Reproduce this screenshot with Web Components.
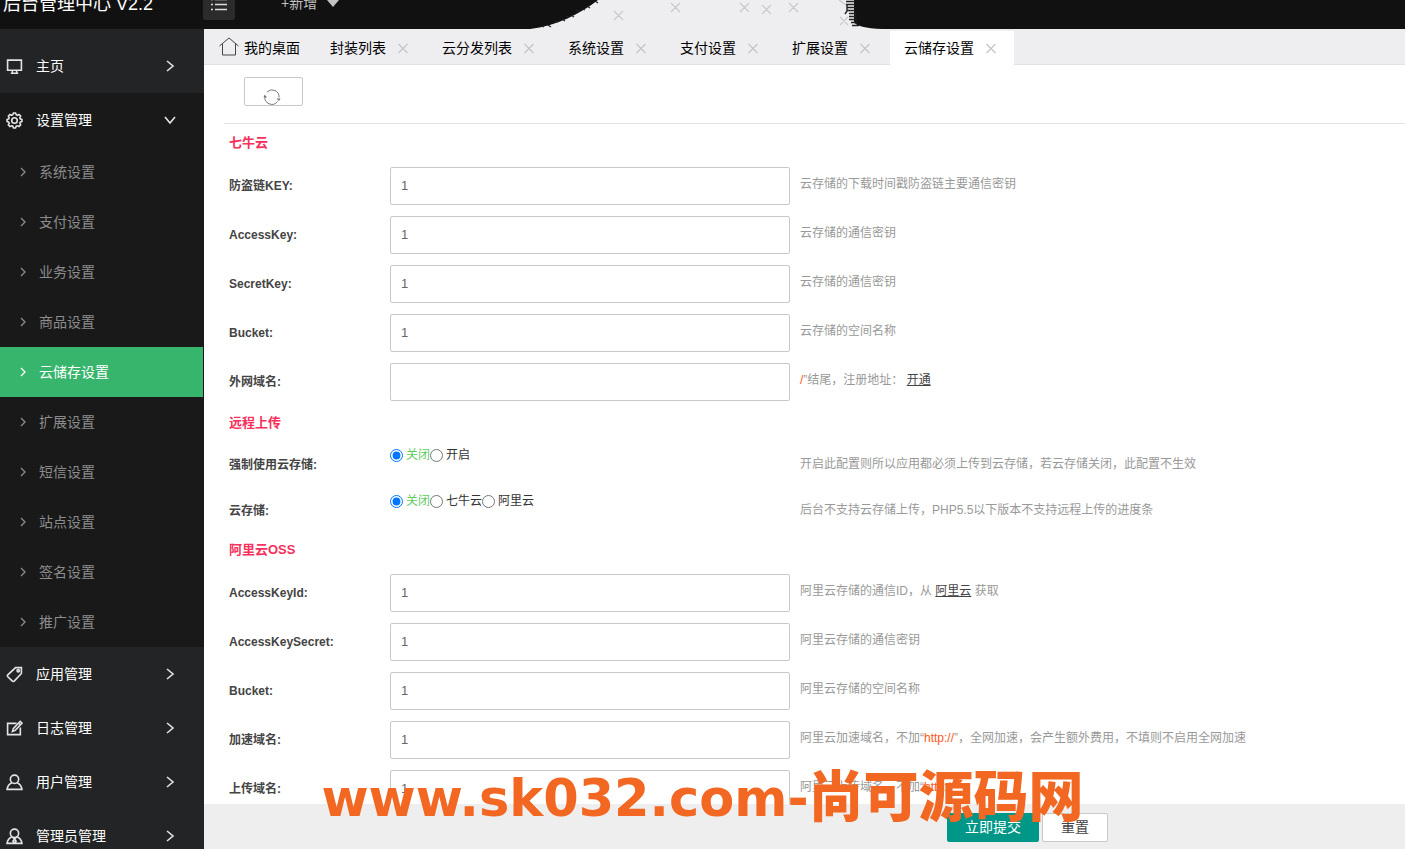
<!DOCTYPE html>
<html lang="zh-CN">
<head>
<meta charset="utf-8">
<title>后台管理中心</title>
<style>
html,body{margin:0;height:100%}
body{font:14px/20px "Liberation Sans","Noto Sans CJK SC",sans-serif;color:#333;background:#fff;overflow:hidden}
</style>
</head>
<body>
<admin-app>
  <admin-header slot="header"></admin-header>
  <side-nav slot="nav">
    <nav-item icon="screen">主页</nav-item>
    <nav-item icon="gear" open>设置管理</nav-item>
    <nav-sub>系统设置</nav-sub>
    <nav-sub>支付设置</nav-sub>
    <nav-sub>业务设置</nav-sub>
    <nav-sub>商品设置</nav-sub>
    <nav-sub active>云储存设置</nav-sub>
    <nav-sub>扩展设置</nav-sub>
    <nav-sub>短信设置</nav-sub>
    <nav-sub>站点设置</nav-sub>
    <nav-sub>签名设置</nav-sub>
    <nav-sub>推广设置</nav-sub>
    <nav-item icon="tag">应用管理</nav-item>
    <nav-item icon="edit">日志管理</nav-item>
    <nav-item icon="user">用户管理</nav-item>
    <nav-item icon="admin">管理员管理</nav-item>
  </side-nav>
  <tab-bar slot="tabs">
    <page-tab home>我的桌面</page-tab>
    <page-tab>封装列表</page-tab>
    <page-tab>云分发列表</page-tab>
    <page-tab>系统设置</page-tab>
    <page-tab>支付设置</page-tab>
    <page-tab>扩展设置</page-tab>
    <page-tab active>云储存设置</page-tab>
  </tab-bar>
  <refresh-bar></refresh-bar>
  <form-section heading="七牛云">
    <text-row label="防盗链KEY:" value="1">云存储的下载时间戳防盗链主要通信密钥</text-row>
    <text-row label="AccessKey:" value="1">云存储的通信密钥</text-row>
    <text-row label="SecretKey:" value="1">云存储的通信密钥</text-row>
    <text-row label="Bucket:" value="1">云存储的空间名称</text-row>
    <text-row label="外网域名:" value=""><em>/</em>”结尾，注册地址： <a href="#">开通</a></text-row>
  </form-section>
  <form-section heading="远程上传">
    <radio-row label="强制使用云存储:" options="关闭,开启">开启此配置则所以应用都必须上传到云存储，若云存储关闭，此配置不生效</radio-row>
    <radio-row label="云存储:" options="关闭,七牛云,阿里云">后台不支持云存储上传，PHP5.5以下版本不支持远程上传的进度条</radio-row>
  </form-section>
  <form-section heading="阿里云OSS">
    <text-row label="AccessKeyId:" value="1">阿里云存储的通信ID，从 <a href="#">阿里云</a> 获取</text-row>
    <text-row label="AccessKeySecret:" value="1">阿里云存储的通信密钥</text-row>
    <text-row label="Bucket:" value="1">阿里云存储的空间名称</text-row>
    <text-row label="加速域名:" value="1">阿里云加速域名，不加“<em>http://</em>”，全网加速，会产生额外费用，不填则不启用全网加速</text-row>
    <text-row label="上传域名:" value="1">阿里云上传域名，不加“<em>http://</em>”</text-row>
  </form-section>
  <action-bar slot="actions"></action-bar>
</admin-app>
<site-mark><span slot="cjk">尚可源码网</span>www.sk032.com-</site-mark>

<script>
function define(name, render) {
  customElements.define(name, class extends HTMLElement {
    constructor() {
      super();
      this.attachShadow({ mode: 'open' });
    }
    connectedCallback() {
      this.shadowRoot.innerHTML = render(this);
    }
  });
}

const reset = '*{box-sizing:border-box}a{color:inherit;text-decoration:none}button,input{font:inherit;color:inherit}svg{display:block;flex:none}';

const icons = {
  screen: '<path d="M1.500 2h13v9.500h-13zM4.500 14.300h7M6 12v2M10 12v2"/>',
  gear: '<path d="M6.400 2.600 7 1h2l.6 1.600 1.100.5 1.600-.8 1.500 1.500-.8 1.600.4 1 1.600.6v2l-1.600.6-.4 1.100.8 1.500-1.500 1.500-1.600-.7-1.100.4L9 15H7l-.6-1.600-1.100-.4-1.600.7-1.500-1.500.8-1.500-.4-1.100L1 9V7l1.600-.6.4-1-.8-1.600 1.500-1.500 1.600.8z"/><circle cx="8" cy="8" r="2.600"/>',
  tag: '<path d="M9 1.500h5.500V7l-6.800 7.200c-.6.600-1.200.6-1.700 0L1.700 10.100c-.5-.6-.5-1.200 0-1.800z"/><circle cx="11.500" cy="4.500" r="1.100"/>',
  edit: '<path d="M10 3.200H1.500v10.600h12V7"/><path d="M13.300 1.200l1.800 1.700-6.400 6.900-2.600 1 .8-2.700zM11.800 2.900l1.800 1.600"/>',
  user: '<circle cx="8" cy="5" r="3.900"/><path d="M5.500 8.200C3 9.200 1.500 11 1 14.500h14c-.5-3.500-2-5.300-4.500-6.300"/>',
  admin: '<circle cx="8" cy="5" r="3.900"/><path d="M5.500 8.200C3 9.200 1.500 11 1 14.500h14c-.5-3.500-2-5.300-4.500-6.300M6 8.500l2 2 2-2M8 10.500l-1.500 2 1.500 1.500 1.500-1.500z"/>'
};

define('admin-app', () => `<style>${reset}
:host{display:flex;flex-direction:column;height:100vh}
.body{flex:1;display:flex;min-height:0}
.page{flex:1;min-width:0;display:flex;flex-direction:column}
main{flex:1;min-height:0;overflow:hidden;padding-left:20px}
</style><slot name="header"></slot><div class="body"><slot name="nav"></slot>
<div class="page"><slot name="tabs"></slot><main><slot></slot></main><slot name="actions"></slot></div></div>`);

define('admin-header', () => `<style>${reset}
:host{display:flex;align-items:flex-end;height:29px;background:#111;color:#fff;position:relative;overflow:hidden;flex:none}
h1{margin:0;width:203px;padding:0 0 13px 3px;font-size:18px;line-height:24px;font-weight:400;white-space:nowrap}
.menu{width:32px;height:32px;margin-bottom:9px;border:0;border-radius:2px;background:#2b2b2c;padding:0 8px 9px;display:flex;align-items:flex-end}
.add{display:flex;gap:10px;align-items:center;margin-left:46px;padding-bottom:16px;color:#c2c2c2;line-height:20px}
.torn{position:absolute;left:530px;top:0}
</style><h1>后台管理中心 V2.2</h1>
<button class="menu" aria-label="菜单"><svg width="16" height="16" stroke="#ddd" stroke-width="1.300"><path d="M0 4.500h2M4 4.500h12M0 9.500h2M4 9.500h12M0 14.500h2M4 14.500h12"/></svg></button>
<a class="add" href="#">+新增<svg width="12" height="8" fill="#c2c2c2"><path d="M0 1h12L6 8z"/></svg></a>
<svg class="torn" width="352" height="29" viewBox="0 0 352 29"><path d="M0 29C26 26 50 14 68 0H324V22Q327 28 352 29z" fill="#eeeef0"/>
<path d="M11 26l3 1M18 25l3 2M25 21l3 1M32 19l3 2M36 16l3 1M41 15l3 2M46 10l3 1M52 9l3 1M57 6l3 2M65 1l3 2" stroke="#222" stroke-width="1.200"/>
<path d="M84 11l9 9m0-9l-9 9M141 3l9 9m0-9l-9 9M210 3l9 9m0-9l-9 9M232 5l9 9m0-9l-9 9M259 3l9 9m0-9l-9 9M310 17l8 8m0-8l-8 8M309 0l7 5" fill="none" stroke="#c9c9cb" stroke-width="1.200"/>
<path d="M316 1.500h9M316 4.500h9M317 7.500h8M317 10.500h8M319 13.500h7M319 16.500h7M319 19.500h8M321 22.500h6M322 25.500h7M317 5v6l-2 3" fill="none" stroke="#222" stroke-width="1.400"/></svg>`);

define('side-nav', () => `<style>
:host{display:block;width:204px;flex:none;box-sizing:border-box;padding-top:10px;background:#222425;overflow:hidden}
</style><nav><slot></slot></nav>`);

define('nav-item', el => `<style>${reset}
:host{display:block;background:#222425;color:#fff}
:host([open]){background:#191919}
a{display:flex;align-items:center;height:54px;padding:0 27px 0 6px}
.t{flex:1;padding-left:13px}
</style><a href="#"><svg width="17" height="17" viewBox="0 0 16 16" fill="none" stroke="#e4e4e4" stroke-width="1.500">${icons[el.getAttribute('icon')]}</svg><span class="t"><slot></slot></span>
<svg width="14" height="14" fill="none" stroke="#e4e4e4" stroke-width="1.600"><path d="${el.hasAttribute('open') ? 'M2 4l5 6 5-6' : 'M4 2l6 5-6 5'}"/></svg></a>`);

define('nav-sub', () => `<style>${reset}
:host{display:block;background:#191919;color:#8c8c8c;padding-right:1px}
a{display:flex;align-items:center;height:50px;padding-left:19px;gap:12px}
:host([active]){color:#fff}
:host([active]) a{background:#38b56c}
</style><a href="#"><svg width="8" height="10" fill="none" stroke="currentColor" stroke-width="1.300"><path d="M2 1l4 4-4 4"/></svg><slot></slot></a>`);

define('tab-bar', () => `<style>
:host{display:flex;align-items:flex-end;flex:none;height:36px;box-sizing:border-box;padding-top:2px;background:#eeeef0;box-shadow:inset 0 -1px #e2e2e4}
</style><slot></slot>`);

define('page-tab', el => `<style>${reset}
:host{display:flex;align-items:center;height:34px;margin:0 1px;padding:0 17px 0 14px;color:#000;white-space:nowrap}
:host([home]){padding-right:14px}
:host([active]){background:#fff}
a{display:flex;align-items:center;gap:5px}
button{display:flex;border:0;background:none;padding:0;margin-left:11px;width:12px;height:12px}
</style><a href="#">${el.hasAttribute('home') ? '<svg width="20" height="22" fill="none" stroke="#444" stroke-width="1"><path d="M.5 9 10 1l9.500 8M3.500 7v11h13V7"/></svg>' : ''}<slot></slot></a>
${el.hasAttribute('home') ? '' : '<button aria-label="关闭"><svg width="12" height="12" stroke="#c4c4c6" stroke-width="1.200"><path d="M1.500 2l9 9M10.500 2l-9 9"/></svg></button>'}`);

define('refresh-bar', () => `<style>${reset}
:host{display:block;padding:12px 20px 17px;border-bottom:1px solid #e2e2e2;margin-bottom:8px}
button{display:flex;justify-content:center;align-items:flex-end;width:59px;height:29px;padding:0 3px 0 0;border:1px solid #c9c9c9;border-radius:2px;background:#fff}
</style><button aria-label="刷新"><svg width="18" height="17" fill="none" stroke="#777" stroke-width="1"><path d="M4 4a7 7 0 0 1 12 5.500M14.500 13.500A7 7 0 0 1 2 8"/><path d="M13.500 10.500h4l-1.500 2.500zM.5 9.500l1.200-3 2.300 3z" fill="#777" stroke="none"/></svg></button>`);

define('form-section', el => `<style>
:host{display:block;padding-left:5px}
h2{margin:0;padding-bottom:13px;font-size:13px;line-height:22px;color:#f5305c}
</style><h2>${el.getAttribute('heading')}</h2><slot></slot>`);

const rowStyle = `${reset}
:host{display:grid;grid-template-columns:161px 400px 1fr;font-size:12px;color:#999}
.label{font-weight:700;color:#444}
.hint{padding-left:10px;line-height:34px;white-space:nowrap}
::slotted(a){color:#444;text-decoration:underline}
::slotted(em){color:#ff5722;font-style:normal}`;

define('text-row', el => `<style>${rowStyle}
:host{height:38px;margin-bottom:11px}
.label{line-height:38px}
input{width:100%;height:38px;border:1px solid #c9c9c9;border-radius:2px;padding:0 10px 2px;font-size:13px;color:#666;outline:0;background:#fff}
</style><label class="label" for="f">${el.getAttribute('label')}</label><input id="f" type="text" value="${el.getAttribute('value')}"><div class="hint"><slot></slot></div>`);

define('radio-row', el => `<style>${rowStyle}
:host{height:46px}
.label{line-height:36px}
.set{display:flex;align-items:center;height:16px;color:#333}
.set label{display:flex;align-items:center;gap:3px;line-height:18px}
input{margin:0;width:13px;height:13px}
input:checked+span{color:#5fcb5f}
</style><span class="label" id="g">${el.getAttribute('label')}</span><div class="set" role="radiogroup" aria-labelledby="g">${el.getAttribute('options').split(',').map((o, i) => `<label><input type="radio" name="o"${i ? '' : ' checked'}><span>${o}</span></label>`).join('')}</div><div class="hint"><slot></slot></div>`);

define('action-bar', () => `<style>${reset}
:host{display:flex;justify-content:flex-end;gap:3px;flex:none;padding:9px 297px 7px 0;background:#eee}
button{height:29px;border:1px solid #c9c9c9;border-radius:2px;background:#fff;padding:0 18px 2px;font-size:14px;line-height:24px;color:#444}
.go{background:#009688;border-color:#009688;color:#fff;padding:0 17px 2px}
</style><button class="go">立即提交</button><button>重置</button>`);

define('site-mark', () => `<style>
:host{position:fixed;left:0;right:0;bottom:10px;display:flex;align-items:baseline;justify-content:center;color:#f26722;font:700 51px/80px "DejaVu Sans",sans-serif;white-space:nowrap;pointer-events:none}
.cjk{font:900 55px/80px "Noto Sans CJK SC",sans-serif}
</style><span><slot></slot></span><span class="cjk"><slot name="cjk"></slot></span>`);
</script>
</body>
</html>
